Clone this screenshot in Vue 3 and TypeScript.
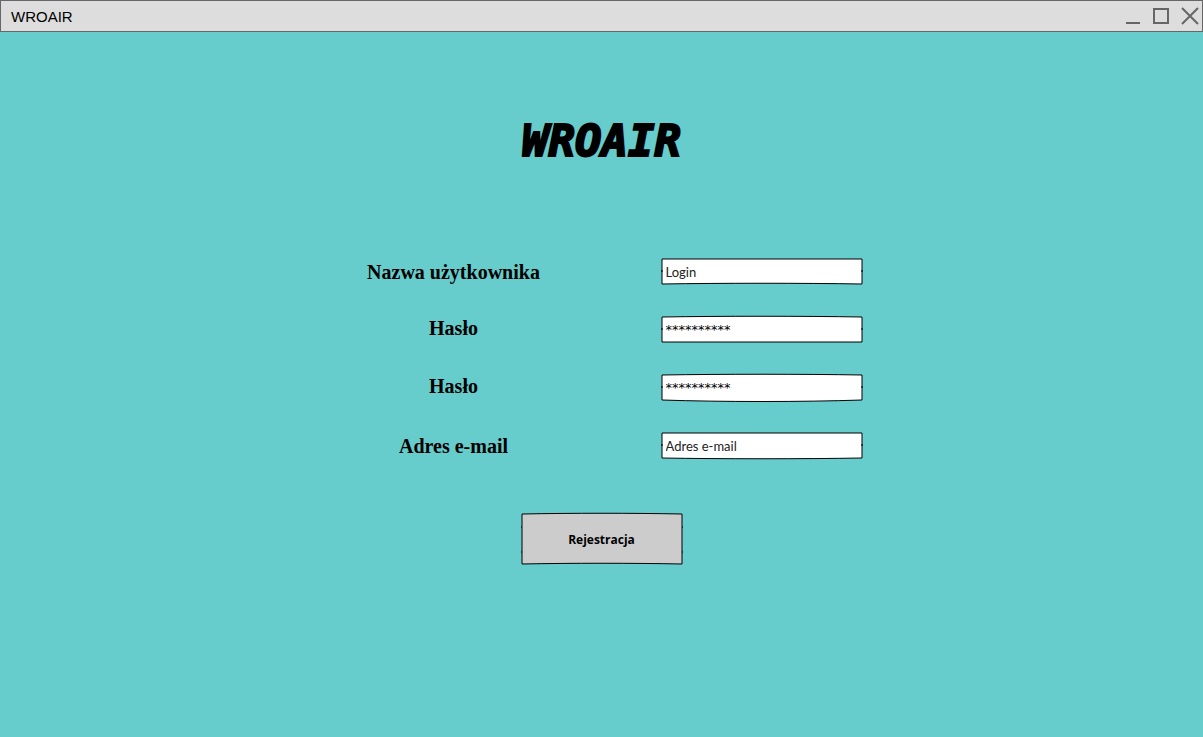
<script setup lang="ts">
import { reactive } from 'vue'

interface Field {
  id: string
  label: string
  placeholder: string
  value: string
  masked: boolean
  outline: string
}

const sideTicks = 'M0 13H2M200 13H202'

const fields = reactive<Field[]>([
  {
    id: 'login', label: 'Nazwa użytkownika', placeholder: 'Login', value: '', masked: false,
    outline: 'M1 1H201V26C141 25 61 25 1 26Z',
  },
  {
    id: 'password', label: 'Hasło', placeholder: '', value: '**********', masked: true,
    outline: 'M1 1C61 0 141 0 201 1V26H1Z',
  },
  {
    id: 'password-repeat', label: 'Hasło', placeholder: '', value: '**********', masked: true,
    outline: 'M1 1C61 0 141 0 201 1V26C141 28 61 28 1 26Z',
  },
  {
    id: 'email', label: 'Adres e-mail', placeholder: 'Adres e-mail', value: '', masked: false,
    outline: 'M1 1H201V26C141 27 61 27 1 26Z',
  },
])
</script>

<template>
  <div class="window">
    <header class="titlebar">
      <span>WROAIR</span>
      <div class="controls">
        <button type="button" aria-label="Minimalizuj">
          <svg viewBox="0 0 18 18"><path d="M1 16H15" /></svg>
        </button>
        <button type="button" aria-label="Maksymalizuj">
          <svg viewBox="0 0 18 18"><path d="M1 2H15V16H1Z" /></svg>
        </button>
        <button type="button" aria-label="Zamknij">
          <svg viewBox="0 0 18 18"><path d="M1 1L17 17M17 1L1 17" /></svg>
        </button>
      </div>
    </header>
    <main>
      <h1>WROAIR</h1>
      <form @submit.prevent>
        <div v-for="field in fields" :key="field.id" class="row" :class="{ masked: field.masked }">
          <label :for="field.id">{{ field.label }}</label>
          <div class="box">
            <svg class="sketch" viewBox="0 0 202 27" preserveAspectRatio="none" aria-hidden="true">
              <path class="field-shape" :d="field.outline" />
              <path :d="sideTicks" />
            </svg>
            <input
              :id="field.id"
              v-model="field.value"
              type="text"
              autocomplete="off"
              :placeholder="field.placeholder"
            />
          </div>
        </div>
        <button class="submit" type="submit">
          <svg class="sketch" viewBox="0 0 162 52" preserveAspectRatio="none" aria-hidden="true">
            <path class="button-shape" d="M1 1C51 0 111 0 161 1V51C111 50 51 50 1 51Z" />
            <path d="M0 14H1M0 39H1M161 14H162M161 39H162" />
          </svg>
          <span>Rejestracja</span>
        </button>
      </form>
    </main>
  </div>
</template>

<style>
body {
  margin: 0;
  background: #66cccc;
}
</style>

<style scoped>
.window {
  min-height: 100vh;
  background: #66cccc;
  color: #000;
}
.titlebar {
  display: flex;
  align-items: center;
  justify-content: space-between;
  box-sizing: border-box;
  height: 32px;
  padding: 0 3px 0 10px;
  border: 1px solid #666;
  background: #ddd;
  font: 15px "Liberation Sans", Arial, sans-serif;
}
.controls {
  display: flex;
  gap: 10px;
}
.controls button {
  display: flex;
  padding: 0;
  border: 0;
  background: none;
}
.controls svg {
  width: 18px;
  height: 18px;
  fill: none;
  stroke: #666;
  stroke-width: 2;
}
main {
  display: flex;
  flex-direction: column;
  align-items: center;
  padding-top: 77px;
}
h1 {
  margin: 0;
  font: italic 700 44px/64px "DejaVu Sans Mono", monospace;
  -webkit-text-stroke: 2px #000;
}
form {
  display: flex;
  flex-direction: column;
  align-items: center;
  gap: 31px;
  padding-top: 85px;
}
.row {
  display: grid;
  grid-template-columns: 226px 202px;
  column-gap: 94px;
  align-items: center;
}
.row.masked {
  align-items: start;
}
label {
  text-align: center;
  font: bold 20px/24px "Liberation Serif", "Times New Roman", serif;
}
.box,
.submit {
  position: relative;
  display: flex;
}
.box {
  height: 27px;
}
.sketch {
  position: absolute;
  inset: 0;
  width: 100%;
  height: 100%;
  overflow: visible;
  fill: none;
  stroke: #000;
  stroke-width: 1;
}
.field-shape {
  fill: #fff;
}
.button-shape {
  fill: #ccc;
}
input {
  position: relative;
  box-sizing: border-box;
  width: 100%;
  padding: 0 5px;
  border: 0;
  background: none;
  color: #000;
  font: 13px Lato, sans-serif;
  outline: none;
}
input::placeholder {
  color: #222;
  opacity: 1;
}
.masked input {
  font: 13px "DejaVu Sans", sans-serif;
}
.submit {
  align-items: center;
  justify-content: center;
  width: 162px;
  height: 52px;
  margin-top: 23px;
  padding: 0;
  border: 0;
  background: none;
  color: #000;
  font: 700 12px "Open Sans", sans-serif;
}
.submit span {
  position: relative;
}
</style>
